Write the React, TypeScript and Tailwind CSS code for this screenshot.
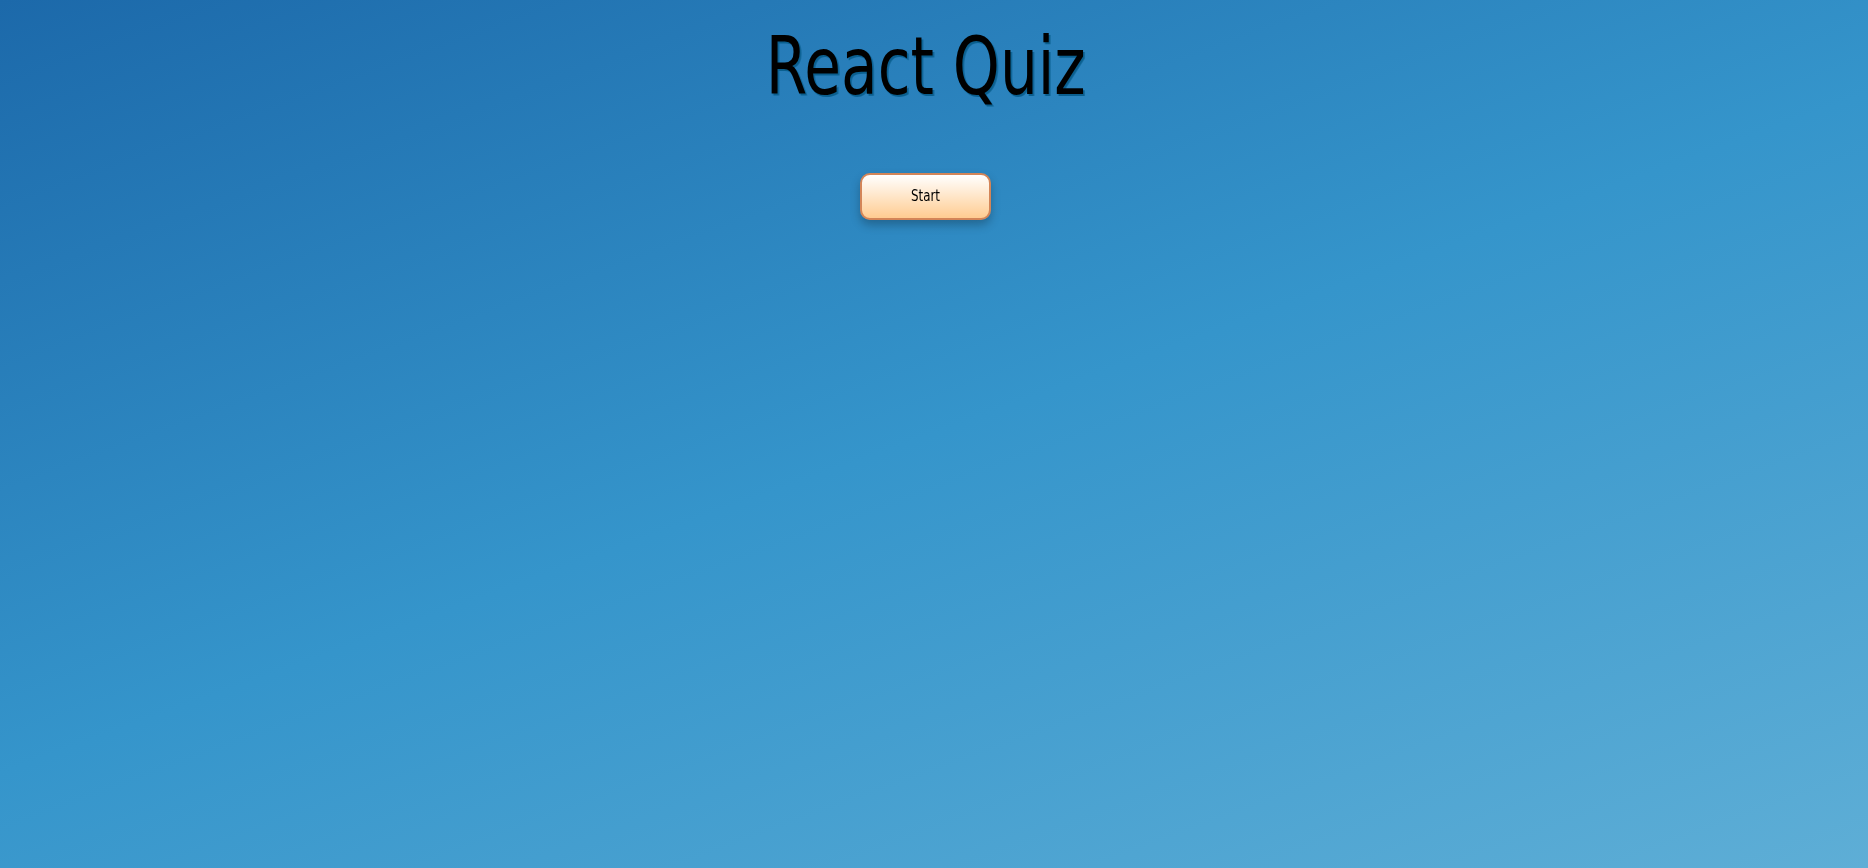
import React from 'react';

export default function App() {
  return (
    <div className="min-h-screen w-full bg-[linear-gradient(160deg,#1c69aa_0%,#3595cb_50%,#5eaed6_100%)] pr-[17px] font-['Liberation_Sans_Narrow','DejaVu_Sans_Condensed',sans-serif]">
      <div className="flex flex-col items-center">
        <h1 className="mt-[27px] scale-x-[0.83] text-[80px] leading-none text-black [filter:drop-shadow(2px_2px_#0a5f8f)]">
          React Quiz
        </h1>
        <button className="mt-[66px] h-[47px] w-[131px] cursor-pointer rounded-[10px] border-2 border-[#d38558] bg-[linear-gradient(180deg,#ffffff,#ffcc91)] text-[15px] text-black shadow-[0_5px_10px_rgba(0,0,0,0.25)]">
          <span className="inline-block scale-x-[0.88]">Start</span>
        </button>
      </div>
    </div>
  );
}
